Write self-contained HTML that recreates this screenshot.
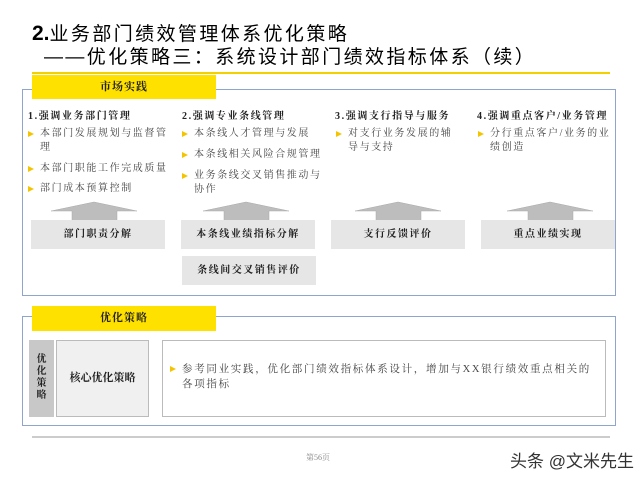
<!DOCTYPE html>
<html><head><meta charset="utf-8"><style>
*{margin:0;padding:0;box-sizing:border-box}
body{width:640px;height:480px;background:#fff;position:relative;overflow:hidden;font-family:"Liberation Serif","Noto Serif CJK SC",serif;color:#222}
.a{position:absolute}
.t{font-family:"Liberation Sans","Noto Sans CJK SC",sans-serif;font-size:19px;color:#000;white-space:nowrap;letter-spacing:2.4px}
.tab{background:#ffe100;font-weight:bold;font-size:11px;text-align:center;letter-spacing:1px}
.box{border:1px solid #8ea5cc}
.h{font-size:10px;font-weight:bold;white-space:nowrap;letter-spacing:1.6px}
.b{font-size:10px;color:#444;line-height:14px;padding-left:12px;position:absolute;letter-spacing:1.6px}
.b:before{content:"";position:absolute;left:0;top:4px;border-left:6px solid #f5c400;border-top:3.5px solid transparent;border-bottom:3.5px solid transparent}
.g{background:#e6e6e6;font-size:10px;font-weight:bold;text-align:center;line-height:29px;letter-spacing:1.5px}
</style></head><body>
<div class="a t" style="left:32px;top:19px;"><b style="font-size:21px;letter-spacing:0">2.</b>业务部门绩效管理体系优化策略</div>
<div class="a t" style="left:44px;top:42px;">——优化策略三：系统设计部门绩效指标体系（续）</div>
<div class="a" style="left:32px;top:72px;width:578px;height:2px;background:#f5d000"></div>
<div class="a box" style="left:22px;top:89px;width:594px;height:207px"></div>
<div class="a tab" style="left:32px;top:75px;width:184px;height:24px;line-height:24px">市场实践</div>
<div class="a h" style="left:28px;top:107px">1.强调业务部门管理</div>
<div class="a h" style="left:182px;top:107px">2.强调专业条线管理</div>
<div class="a h" style="left:335px;top:107px">3.强调支行指导与服务</div>
<div class="a h" style="left:477px;top:107px">4.强调重点客户/业务管理</div>
<div class="b" style="left:28px;top:127px;width:146px">本部门发展规划与监督管理</div>
<div class="b" style="left:28px;top:162px;width:146px">本部门职能工作完成质量</div>
<div class="b" style="left:28px;top:182px;width:146px">部门成本预算控制</div>
<div class="b" style="left:182px;top:127px;width:150px">本条线人才管理与发展</div>
<div class="b" style="left:182px;top:148px;width:150px">本条线相关风险合规管理</div>
<div class="b" style="left:182px;top:169px;width:150px">业务条线交叉销售推动与协作</div>
<div class="b" style="left:336px;top:127px;width:124px">对支行业务发展的辅导与支持</div>
<div class="b" style="left:478px;top:127px;width:136px">分行重点客户/业务的业绩创造</div>
<svg class="a" style="left:0;top:0" width="640" height="480">
<g fill="#bdbdbd" stroke="#aaa" stroke-width="0.5">
<polygon points="51,211 94,202 137,211 117,211 117,221 72,221 72,211"/>
<polygon points="203,211 246,202 289,211 269,211 269,221 224,221 224,211"/>
<polygon points="355,211 398,202 441,211 421,211 421,221 376,221 376,211"/>
<polygon points="507,211 550,202 593,211 573,211 573,221 528,221 528,211"/>
</g></svg>
<div class="a g" style="left:31px;top:220px;width:134px;height:29px">部门职责分解</div>
<div class="a g" style="left:181px;top:220px;width:134px;height:29px">本条线业绩指标分解</div>
<div class="a g" style="left:331px;top:220px;width:134px;height:29px">支行反馈评价</div>
<div class="a g" style="left:481px;top:220px;width:134px;height:29px">重点业绩实现</div>
<div class="a g" style="left:182px;top:256px;width:134px;height:29px">条线间交叉销售评价</div>
<div class="a box" style="left:22px;top:316px;width:594px;height:110px"></div>
<div class="a tab" style="left:32px;top:306px;width:184px;height:25px;line-height:25px">优化策略</div>
<div class="a" style="left:29px;top:340px;width:25px;height:77px;background:#c8c8c8;font-size:10px;font-weight:bold;text-align:center;line-height:12px;padding-top:14px">优<br>化<br>策<br>略</div>
<div class="a" style="left:56px;top:340px;width:93px;height:77px;background:#f0f0f0;border:1px solid #bbb;font-size:11px;font-weight:bold;text-align:center;line-height:75px">核心优化策略</div>
<div class="a" style="left:162px;top:340px;width:444px;height:77px;border:1.5px solid #bbb"></div>
<div class="b" style="left:170px;top:362px;width:432px;font-size:10.5px;line-height:15px;letter-spacing:1.7px">参考同业实践，优化部门绩效指标体系设计，增加与XX银行绩效重点相关的各项指标</div>
<div class="a" style="left:32px;top:436px;width:578px;height:2px;background:#ccc"></div>
<div class="a" style="left:306px;top:452px;font-size:8px;color:#888">第56页</div>
<div class="a" style="left:510px;top:447px;font-size:17px;color:#333;font-family:'Liberation Sans','Noto Sans CJK SC',sans-serif">头条 @文米先生</div>
</body></html>
